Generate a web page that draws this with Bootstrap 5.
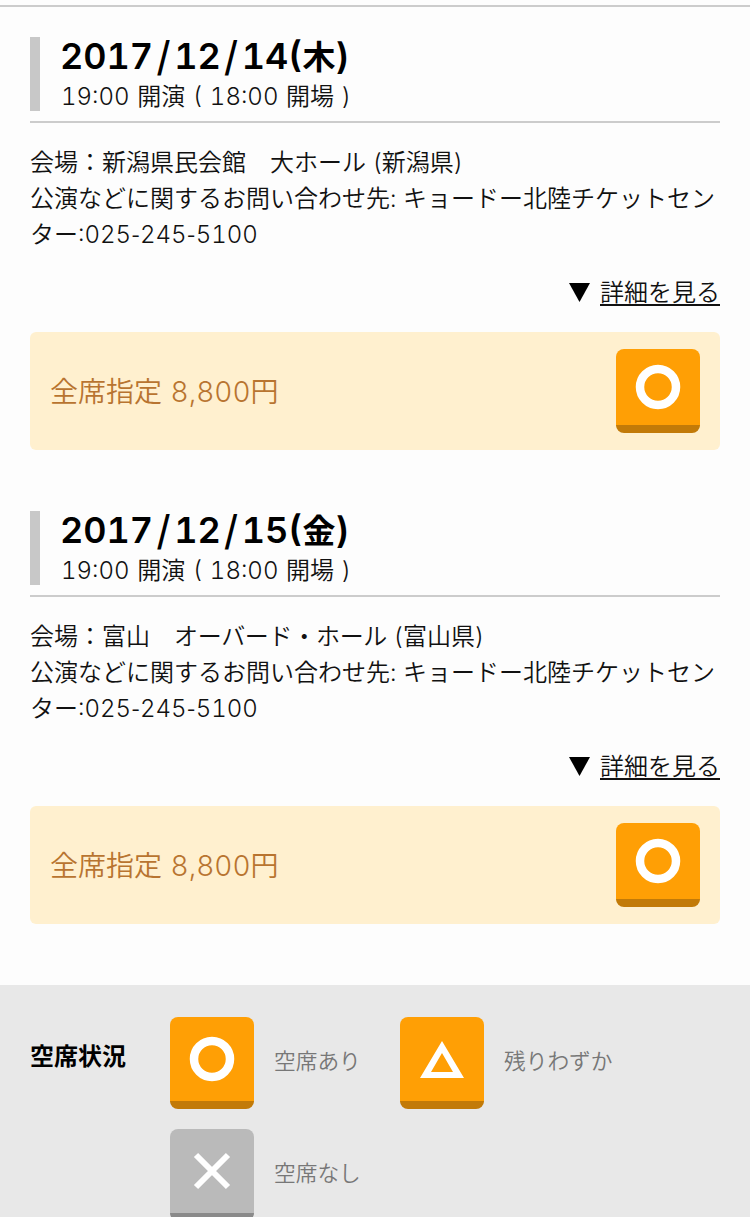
<!DOCTYPE html>
<html lang="ja">
<head>
<meta charset="utf-8">
<meta name="viewport" content="width=device-width, initial-scale=1">
<title>公演スケジュール</title>
<link rel="stylesheet" href="https://cdn.jsdelivr.net/npm/bootstrap@5.3.0/dist/css/bootstrap.min.css">
<style>
html{overflow:hidden}
body{height:1217px;overflow:hidden;background:#fdfdfd;color:#111;font:350 24px/36px Inter,"Noto Sans CJK JP",sans-serif;font-variant-numeric:tabular-nums;white-space:nowrap}
.schedule{margin-top:5px;border-top:2px solid #ccc;padding:30px 30px 0}
.show{height:474px}
.show-head{height:86px;border-bottom:2px solid #ccc}
.show-title{height:74px;border-left:10px solid #c8c8c8;padding:0 0 0 20px}
.show-date{font-size:36px;line-height:38px;height:38px;font-weight:600;color:#000}
.slash{font-family:"Noto Sans CJK JP",sans-serif;display:inline-block;width:21px;text-align:center;line-height:30px}
.weekday{font-size:33px}
.show-time{line-height:36px;padding:4px 0 0 1px;word-spacing:1.2px}
.venue{padding-top:22px}
.hall{letter-spacing:-.3px}
.hyphen{font-family:"Noto Sans CJK JP",sans-serif;display:inline-block;width:9px;text-align:center;line-height:30px}
.detail{margin-top:21px;height:36px;gap:10px}
.detail a{color:#111;text-decoration:none;border-bottom:2px solid #111;line-height:28px;height:27px}
.price{margin-top:22px;height:118px;border-radius:6px;background:#fff0cf;color:#b87430;font-size:28px;padding:0 20px;word-spacing:1px}
.price-name{padding-top:2px}
.seat{display:block;width:84px;height:92px;border-radius:8px;background:#ff9f05;border-bottom:8px solid #c27a08;flex:none}
.seat-short{height:84px}
.seat-none{background:#bababa;border-color:#8a8a8a}
.seat svg{display:block;width:84px;height:84px}
.seat-short svg{height:76px}
.legend{height:232px;background:#e8e8e8;padding:32px 30px 0}
.legend-name{width:140px;font-weight:700;color:#000;padding-top:22px}
.legend-list{row-gap:20px}
.legend-item{width:230px;height:92px;gap:20px;color:#777;font-size:21.7px}
.legend-label{padding-bottom:5px}
</style>
</head>
<body>
<main class="schedule">
  <section class="show">
    <div class="show-head"><div class="show-title">
      <h2 class="show-date m-0">2017<span class="slash">/</span>12<span class="slash">/</span>14(<span class="weekday">木</span>)</h2>
      <div class="show-time">19:00 開演 ( 18:00 開場 )</div>
    </div></div>
    <div class="venue">
      <div>会場：新潟県民会館　大ホール (新潟県)</div>
      <div>公演などに関するお問い合わせ先: キョードー北陸チケットセン</div>
      <div>ター:025<span class="hyphen">-</span>245<span class="hyphen">-</span>5100</div>
    </div>
    <div class="detail d-flex justify-content-end align-items-center">
      <svg width="21" height="19" viewBox="0 0 21 19"><path d="M0 0H21L10.500 19Z" fill="#000"/></svg><a href="#">詳細を見る</a>
    </div>
    <div class="price d-flex justify-content-between align-items-center">
      <span class="price-name">全席指定 8,800円</span>
      <span class="seat seat-short"><svg viewBox="0 0 84 76"><circle cx="42" cy="38" r="18" fill="none" stroke="#fff" stroke-width="8.500"/></svg></span>
    </div>
  </section>
  <section class="show">
    <div class="show-head"><div class="show-title">
      <h2 class="show-date m-0">2017<span class="slash">/</span>12<span class="slash">/</span>15(<span class="weekday">金</span>)</h2>
      <div class="show-time">19:00 開演 ( 18:00 開場 )</div>
    </div></div>
    <div class="venue">
      <div>会場：富山　<span class="hall">オーバード・ホール</span> (富山県)</div>
      <div>公演などに関するお問い合わせ先: キョードー北陸チケットセン</div>
      <div>ター:025<span class="hyphen">-</span>245<span class="hyphen">-</span>5100</div>
    </div>
    <div class="detail d-flex justify-content-end align-items-center">
      <svg width="21" height="19" viewBox="0 0 21 19"><path d="M0 0H21L10.500 19Z" fill="#000"/></svg><a href="#">詳細を見る</a>
    </div>
    <div class="price d-flex justify-content-between align-items-center">
      <span class="price-name">全席指定 8,800円</span>
      <span class="seat seat-short"><svg viewBox="0 0 84 76"><circle cx="42" cy="38" r="18" fill="none" stroke="#fff" stroke-width="8.500"/></svg></span>
    </div>
  </section>
</main>
<footer class="legend d-flex">
  <div class="legend-name flex-shrink-0">空席状況</div>
  <div class="legend-list d-flex flex-wrap align-content-start">
    <div class="legend-item d-flex align-items-center"><span class="seat"><svg viewBox="0 0 84 84"><circle cx="42" cy="42" r="18" fill="none" stroke="#fff" stroke-width="8.500"/></svg></span><span class="legend-label">空席あり</span></div>
    <div class="legend-item d-flex align-items-center"><span class="seat"><svg viewBox="0 0 84 84"><path d="M42 24L64 61H20ZM42 36L31 55H53Z" fill="#fff" fill-rule="evenodd"/></svg></span><span class="legend-label">残りわずか</span></div>
    <div class="legend-item d-flex align-items-center"><span class="seat seat-none"><svg viewBox="0 0 84 84"><path d="M26 26L58 58M58 26L26 58" stroke="#fff" stroke-width="6"/></svg></span><span class="legend-label">空席なし</span></div>
  </div>
</footer>
<script src="https://cdn.jsdelivr.net/npm/bootstrap@5.3.0/dist/js/bootstrap.bundle.min.js"></script>
</body>
</html>
